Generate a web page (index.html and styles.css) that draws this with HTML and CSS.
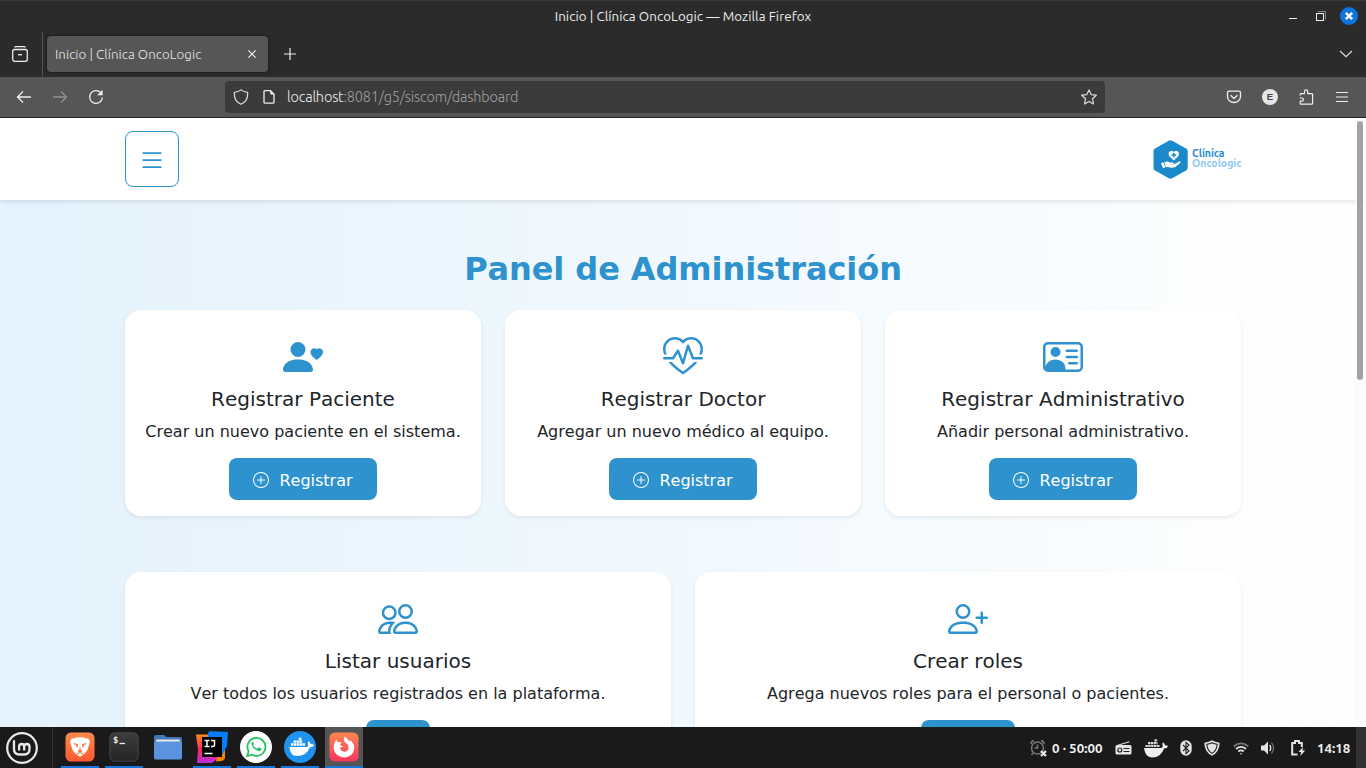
FILE: index.html
```html
<!DOCTYPE html>
<html lang="es">
<head>
<meta charset="utf-8">
<title>Inicio | Clínica OncoLogic</title>
<link rel="stylesheet" href="styles.css">
</head>
<body>
<div class="desktop">
  <div class="titlebar">
    <span class="titlebar-text">Inicio | Clínica OncoLogic — Mozilla Firefox</span>
    <div class="window-controls">
      <svg width="10" height="18" viewBox="0 0 10 18"><path d="M1 11.5h8" stroke="#eee"/></svg>
      <svg width="12" height="18" viewBox="0 0 12 18"><path d="M3 4.500h7.500v8" stroke="#888" fill="none"/><rect x="1.500" y="6.500" width="7" height="7" stroke="#eee" fill="none"/></svg>
      <svg width="18" height="18" viewBox="0 0 18 18"><circle cx="9" cy="9" r="9" fill="#0d74e0"/><path d="M5.800 5.800l6.400 6.400M12.200 5.800l-6.400 6.400" stroke="#fff" stroke-width="2.400"/></svg>
    </div>
  </div>
  <div class="tabstrip">
    <svg class="view-icon" width="16" height="16" viewBox="0 0 16 16" fill="none" stroke="#eee" stroke-width="1.300"><path d="M2.500 1.300Q3 .7 4 .7h8q1 0 1.500.6"/><rect x=".7" y="3.500" width="14.600" height="11.800" rx="2"/><path d="M6 8.700h4"/></svg>
    <div class="divider"></div>
    <div class="tab">
      <span>Inicio | Clínica OncoLogic</span>
      <svg width="8" height="8" viewBox="0 0 8 8"><path d="M.4.4l7.200 7.200M7.600.4L.4 7.600" stroke="#eee" stroke-width="1.200"/></svg>
    </div>
    <svg class="new-tab" width="12" height="12" viewBox="0 0 12 12"><path d="M6 0v12M0 6h12" stroke="#eee" stroke-width="1.200"/></svg>
    <svg class="all-tabs" width="14" height="8" viewBox="0 0 14 8"><path d="M1 1l6 5.600L13 1" fill="none" stroke="#ddd" stroke-width="1.200"/></svg>
  </div>
  <div class="toolbar">
    <svg width="16" height="16" viewBox="0 0 16 16" fill="none" stroke="#eee" stroke-width="1.300"><path d="M15 8H1.700M7 2.500L1.500 8 7 13.500"/></svg>
    <svg width="16" height="16" viewBox="0 0 16 16" fill="none" stroke="#909090" stroke-width="1.300"><path d="M1 8h13.300M9 2.500L14.500 8 9 13.500"/></svg>
    <svg width="16" height="16" viewBox="0 0 16 16" fill="none" stroke="#eee" stroke-width="1.300"><path d="M14.400 8.500A6.400 6.400 0 1 1 12.600 3.500"/><path d="M14.600.8v5.400H9.200z" fill="#eee" stroke="none"/></svg>
    <div class="urlbar">
      <svg width="16" height="16" viewBox="0 0 16 16" fill="none" stroke="#ddd" stroke-width="1.200"><path d="M8 .9Q6 2.700 1.400 3.400 .6 12 8 15.300 15.400 12 14.600 3.400 10 2.700 8 .9z"/></svg>
      <svg class="page-icon" width="12" height="16" viewBox="0 0 12 16" fill="none" stroke="#eee" stroke-width="1.300"><path d="M7.500 1.700H1.800Q1 1.700 1 2.500v10.800q0 .8.800.8h8.400q.8 0 .8-.8V5.200z"/><path d="M7.300 1.200l4.200 4.300H8.200q-.9 0-.9-.9z" fill="#eee" stroke="none"/></svg>
      <span class="url"><b>localhost</b>:8081/g5/siscom/dashboard</span>
      <svg class="star" width="16" height="16" viewBox="0 0 16 16" fill="none" stroke="#ddd" stroke-width="1.200" stroke-linejoin="round"><path d="M8 .9l2.200 4.700 5.100.6-3.800 3.500 1 5.300L8 12.400 3.500 15l1-5.300L.7 6.200l5.100-.6z"/></svg>
    </div>
    <div class="toolbar-actions">
      <svg width="16" height="16" viewBox="0 0 16 16" fill="none" stroke="#eee" stroke-width="1.300"><path d="M3 2.200h10q1.500 0 1.500 1.500V7.500a6.500 6 0 0 1-13 0V3.700Q1.500 2.200 3 2.200z"/><path d="M4.600 6.300L8 9.500l3.400-3.200"/></svg>
      <span class="avatar">E</span>
      <svg width="16" height="16" viewBox="0 0 16 16" fill="none" stroke="#eee" stroke-width="1.200" stroke-linejoin="round"><path d="M2.200 6.500V5.400q0-.8.800-.8h3.500V2.500a1.500 1.500 0 0 1 3.200 0v2.100h4q.9 0 .9.900V14.300q0 .9-.9.900H3q-.8 0-.8-.8v-2.200h1.700a1.500 1.500 0 0 0 0-3.200H1.700"/></svg>
      <svg width="16" height="16" viewBox="0 0 16 16" stroke="#eee" stroke-width="1.100"><path d="M2 3.500h12M2 8h12M2 12.500h12"/></svg>
    </div>
  </div>

  <div class="viewport">
    <header class="navbar">
      <button class="menu-btn"><svg width="28" height="28" viewBox="0 0 16 16" fill="currentColor"><path d="M2.500 12a.5.5 0 0 1 .5-.5h10a.5.5 0 0 1 0 1H3a.5.5 0 0 1-.5-.5m0-4a.5.5 0 0 1 .5-.5h10a.5.5 0 0 1 0 1H3a.5.5 0 0 1-.5-.5m0-4a.5.5 0 0 1 .5-.5h10a.5.5 0 0 1 0 1H3a.5.5 0 0 1-.5-.5"/></svg></button>
      <div class="brand">
        <svg width="35" height="39" viewBox="0 0 35 39"><path d="M15.800.8q1.700-.9 3.400 0l14.200 8q1.300.8 1.300 2.200v17q0 1.400-1.300 2.200l-14.200 8q-1.700.9-3.400 0l-14.200-8Q.5 29.400.5 28V11q0-1.400 1.100-2.200z" fill="#1b8acd"/><path d="M20.800 20.400l-4.300-4.200c-2.800-3.500 1.800-7.400 4.300-4.200 2.500-3.200 7.100.7 4.300 4.200z" fill="#fff"/><path d="M20.800 12.700v4.600M18.500 15h4.600" stroke="#1b8acd" stroke-width="1.600"/><path d="M8 23.300l2.300-1 2 5.300-2.200.7zM11.300 22.300q2.900-1.700 5.400.3h3.600q1.500 1.200-.2 1.700h-3.500q3.600.8 5.600-.5l4.400-2.500q1.500.1.500 1.600l-4.400 3.800q-3.300 2-7.700.4l-2.400-.1z" fill="#fff"/></svg>
        <div class="brand-text"><span class="brand-top">Clínica</span><span class="brand-sub">Oncologic</span></div>
      </div>
    </header>
    <main class="panel">
      <h1>Panel de Administración</h1>
      <section class="cards three">
        <article class="card">
          <svg class="card-icon" viewBox="0 0 16 16"><path d="M9 5a3 3 0 1 1-6 0 3 3 0 0 1 6 0m-9 8c0 1 1 1 1 1h10s1 0 1-1-1-4-6-4-6 3-6 4m13.500-8.090c1.387-1.425 4.855 1.070 0 4.277-4.854-3.207-1.387-5.702 0-4.276Z"/></svg>
          <h2>Registrar Paciente</h2><p>Crear un nuevo paciente en el sistema.</p>
          <button class="btn"><svg width="16" height="16" viewBox="0 0 16 16"><path d="M8 15A7 7 0 1 1 8 1a7 7 0 0 1 0 14m0 1A8 8 0 1 0 8 0a8 8 0 0 0 0 16"/><path d="M8 4a.5.5 0 0 1 .5.5v3h3a.5.5 0 0 1 0 1h-3v3a.5.5 0 0 1-1 0v-3h-3a.5.5 0 0 1 0-1h3v-3A.5.5 0 0 1 8 4"/></svg><span>Registrar</span></button>
        </article>
        <article class="card">
          <svg class="card-icon" viewBox="0 0 16 16"><path d="m8 2.748-.717-.737C5.600.281 2.514.878 1.400 3.053.918 3.995.78 5.323 1.508 7H.43c-2.128-5.697 4.165-8.830 7.394-5.857q.09.083.176.171a3 3 0 0 1 .176-.17c3.230-2.974 9.522.159 7.394 5.856h-1.078c.728-1.677.59-3.005.108-3.947C13.486.878 10.400.28 8.717 2.010zM2.212 10h1.315C4.593 11.183 6.050 12.458 8 13.795c1.949-1.337 3.407-2.612 4.473-3.795h1.315c-1.265 1.566-3.140 3.250-5.788 5-2.648-1.750-4.523-3.434-5.788-5"/><path d="M10.464 3.314a.5.5 0 0 0-.945.049L7.921 8.956 6.464 5.314a.5.5 0 0 0-.88-.091L3.732 8H.5a.5.5 0 0 0 0 1H4a.5.5 0 0 0 .416-.223l1.473-2.209 1.647 4.118a.5.5 0 0 0 .945-.049l1.598-5.593 1.457 3.642A.5.5 0 0 0 12 9h3.500a.5.5 0 0 0 0-1h-3.162z"/></svg>
          <h2>Registrar Doctor</h2><p>Agregar un nuevo médico al equipo.</p>
          <button class="btn"><svg width="16" height="16" viewBox="0 0 16 16"><path d="M8 15A7 7 0 1 1 8 1a7 7 0 0 1 0 14m0 1A8 8 0 1 0 8 0a8 8 0 0 0 0 16"/><path d="M8 4a.5.5 0 0 1 .5.5v3h3a.5.5 0 0 1 0 1h-3v3a.5.5 0 0 1-1 0v-3h-3a.5.5 0 0 1 0-1h3v-3A.5.5 0 0 1 8 4"/></svg><span>Registrar</span></button>
        </article>
        <article class="card">
          <svg class="card-icon" viewBox="0 0 16 16"><path d="M5 8a2 2 0 1 0 0-4 2 2 0 0 0 0 4m4-2.500a.5.5 0 0 1 .5-.5h4a.5.5 0 0 1 0 1h-4a.5.5 0 0 1-.5-.5M9 8a.5.5 0 0 1 .5-.5h4a.5.5 0 0 1 0 1h-4A.5.5 0 0 1 9 8m1 2.500a.5.5 0 0 1 .5-.5h3a.5.5 0 0 1 0 1h-3a.5.5 0 0 1-.5-.5"/><path d="M2 2a2 2 0 0 0-2 2v8a2 2 0 0 0 2 2h12a2 2 0 0 0 2-2V4a2 2 0 0 0-2-2zM1 4a1 1 0 0 1 1-1h12a1 1 0 0 1 1 1v8a1 1 0 0 1-1 1H8.960q.04-.245.040-.5C9 10.567 7.210 9 5 9c-2.086 0-3.800 1.398-3.984 3.181A1 1 0 0 1 1 12z"/></svg>
          <h2>Registrar Administrativo</h2><p>Añadir personal administrativo.</p>
          <button class="btn"><svg width="16" height="16" viewBox="0 0 16 16"><path d="M8 15A7 7 0 1 1 8 1a7 7 0 0 1 0 14m0 1A8 8 0 1 0 8 0a8 8 0 0 0 0 16"/><path d="M8 4a.5.5 0 0 1 .5.5v3h3a.5.5 0 0 1 0 1h-3v3a.5.5 0 0 1-1 0v-3h-3a.5.5 0 0 1 0-1h3v-3A.5.5 0 0 1 8 4"/></svg><span>Registrar</span></button>
        </article>
      </section>
      <section class="cards two">
        <article class="card">
          <svg class="card-icon" viewBox="0 0 16 16"><path d="M15 14s1 0 1-1-1-4-5-4-5 3-5 4 1 1 1 1zm-7.978-1L7 12.996c.001-.264.167-1.030.76-1.720C8.312 10.629 9.282 10 11 10c1.717 0 2.687.63 3.240 1.276.593.69.758 1.457.76 1.720l-.008.002-.014.002zM11 7a2 2 0 1 0 0-4 2 2 0 0 0 0 4m3-2a3 3 0 1 1-6 0 3 3 0 0 1 6 0M6.936 9.280a6 6 0 0 0-1.230-.247A7 7 0 0 0 5 9c-4 0-5 3-5 4q0 1 1 1h4.216A2.240 2.240 0 0 1 5 13c0-1.010.377-2.042 1.090-2.904.243-.294.526-.569.846-.816M4.920 10A5.500 5.500 0 0 0 4 13H1c0-.26.164-1.030.76-1.724.545-.636 1.492-1.256 3.160-1.275ZM1.500 5.500a3 3 0 1 1 6 0 3 3 0 0 1-6 0m3-2a2 2 0 1 0 0 4 2 2 0 0 0 0-4"/></svg>
          <h2>Listar usuarios</h2><p>Ver todos los usuarios registrados en la plataforma.</p>
          <button class="btn btn-list" aria-label="Listar"></button>
        </article>
        <article class="card">
          <svg class="card-icon" viewBox="0 0 16 16"><path d="M6 8a3 3 0 1 0 0-6 3 3 0 0 0 0 6m2-3a2 2 0 1 1-4 0 2 2 0 0 1 4 0m4 8c0 1-1 1-1 1H1s-1 0-1-1 1-4 6-4 6 3 6 4m-1-.004c-.001-.246-.154-.986-.832-1.664C9.516 10.680 8.289 10 6 10s-3.516.68-4.168 1.332c-.678.678-.83 1.418-.832 1.664z"/><path d="M13.500 5a.5.5 0 0 1 .5.5V7h1.500a.5.5 0 0 1 0 1H14v1.500a.5.5 0 0 1-1 0V8h-1.500a.5.5 0 0 1 0-1H13V5.500a.5.5 0 0 1 .5-.5"/></svg>
          <h2>Crear roles</h2><p>Agrega nuevos roles para el personal o pacientes.</p>
          <button class="btn btn-roles" aria-label="Crear"></button>
        </article>
      </section>
    </main>
    <div class="scrollbar"><div class="thumb"></div></div>
  </div>

  <footer class="taskbar">
    <div class="start"><svg width="32" height="32" viewBox="0 0 32 32" fill="none" stroke="#e8e8e8"><circle cx="16" cy="16" r="14.800" stroke-width="2.200"/><path d="M8 8.200v8.800q0 5.500 5.500 5.500h4.500q5.500 0 5.500-5.500v-2q0-3-2.700-3-2.600 0-2.600 3v3.500M18.200 15q0-3-2.500-3-2.600 0-2.600 3v3.500" stroke-width="2.300"/></svg></div>
    <div class="apps">
      <div class="app running"><svg width="30" height="30" viewBox="0 0 30 30"><defs><linearGradient id="br" x2="0" y2="1"><stop stop-color="#ff8a4a"/><stop offset="1" stop-color="#fb5a30"/></linearGradient></defs><rect x=".5" y=".5" width="29" height="29" rx="5.500" fill="url(#br)"/><path d="M9.500 6.500l2-1.300h7l2 1.300 2.500-.3 2 3.300-.9 3-1.600 5.500-2.500 3.300L15 25l-5-3.700L7.500 18l-1.600-5.500-.9-3 2-3.300z" fill="#fff"/><path d="M8.800 11.500l3.700 1.300-.8 2.600M21.200 11.500l-3.700 1.300.8 2.600M13 18.700l2 1 2-1M15 15.500v4M12 22l3-1.500 3 1.500" fill="none" stroke="#fb7040" stroke-width="1.300"/></svg></div>
      <div class="app running"><svg width="30" height="30" viewBox="0 0 30 30"><defs><linearGradient id="tm" x2="0" y2="1"><stop stop-color="#3d3d3d"/><stop offset="1" stop-color="#242424"/></linearGradient></defs><rect x=".8" y=".8" width="28.400" height="28.400" rx="5" fill="url(#tm)" stroke="#555" stroke-width=".7"/><text class="term-glyph" x="4" y="11">$</text><path d="M10.500 11.500h5.500" stroke="#eee" stroke-width="1.300"/></svg></div>
      <div class="app folder"><svg width="30" height="30" viewBox="0 0 30 30"><path d="M1 6q0-2 2-2h8l2.500 2H27q2 0 2 2v8H1z" fill="#4577b5"/><path d="M3 10q0-1.500 1-1.500h22q1 0 1 1.500v4H3z" fill="#e8e8e8"/><rect x="1" y="10.500" width="28" height="18" rx="1.500" fill="#5b93df"/></svg></div>
      <div class="app running"><svg width="32" height="32" viewBox="0 0 32 32"><defs><linearGradient id="ij" x2="0" y2="1"><stop stop-color="#ff8a1c"/><stop offset=".5" stop-color="#ff285c"/><stop offset="1" stop-color="#b92ce0"/></linearGradient></defs><path d="M0 3.500h13l13 21-10 7.500H1L2 19z" fill="url(#ij)"/><path d="M22 20l7-1v8q-1 3-4 3l-5 .5z" fill="#ff8000"/><path d="M12 2.500Q12 0 15 .2L32 1l-1 14-5 9L11 16z" fill="#087cfa"/><rect x="6" y="6" width="20" height="20"/><path d="M8.500 9.500h5M11 9.500v6M8.500 15.500h5M15 9.500h3.500V14q0 1.500-1.500 1.500h-2M8.500 22.500h8" stroke="#fff" stroke-width="1.500" fill="none"/></svg></div>
      <div class="app running"><svg width="32" height="32" viewBox="0 0 32 32"><circle cx="16" cy="16" r="16" fill="#fff"/><path d="M7.300 25l1.300-4.700A9 9 0 1 1 12 23.700z" fill="none" stroke="#22c35e" stroke-width="1.800"/><path d="M12.300 11q-1.200 1.300-.6 3 1.800 4.800 7.300 6.300 1.800 0 2.400-1.800l-.1-1-2.600-1.200-1.500 1.500q-3-1.200-4.200-3.800l1-1.300-1-2z" fill="#22c35e"/></svg></div>
      <div class="app running"><svg width="32" height="32" viewBox="0 0 32 32"><circle cx="16" cy="16" r="16" fill="#1f93ee"/><path d="M5.500 16h17q1.500-.3 1.900-1.200-1.600-2.600.1-4.600 2 1.100 2.200 3.100 2.100-.4 3.300.4-.9 2.700-4.200 2.700Q22.600 25 13 25q-7 0-7.500-9z" fill="#fff"/><path d="M7 13.500h14M9.500 10.700h9M14.800 8h3" stroke="#fff" stroke-width="2.300" stroke-dasharray="2.500 .4"/></svg></div>
      <div class="app running active"><svg width="30" height="30" viewBox="0 0 30 30"><defs><linearGradient id="ff" x2="0" y2="1"><stop stop-color="#ff8850"/><stop offset="1" stop-color="#f7365f"/></linearGradient></defs><rect x=".5" y=".5" width="29" height="29" rx="5.500" fill="url(#ff)"/><path d="M15.500 4.500q4 2.200 4.500 5.300l1.300-1.800Q26 12.500 25.200 17 23.500 25 15.500 25.500 7 25 5 18 4 12 7.300 8l1.500 2.300q2.200-.8 3.700.3l-1.500 2.200 3 2q-1.400 1.200-3.100.3.600 4.500 4.500 4.700 3.900-.5 4-4.400 0-3.200-3-5-2.500-3-.9-5.900z" fill="#fff"/></svg></div>
    </div>
    <div class="tray">
      <svg class="alarm" width="17" height="18" viewBox="0 0 17 18" fill="none" stroke="#777" stroke-width="1.500"><circle cx="7.500" cy="9" r="6"/><path d="M7.500 5.500V9h-3M1 5Q1 2 4 1.500M11 1.500q3 .5 3 3.500M3 14l-1.500 2"/><path d="M11 12l5 5M16 12l-5 5" stroke="#eee" stroke-width="2"/></svg>
      <span class="timer">0 · 50:00</span>
      <svg class="radio" width="17" height="14" viewBox="0 0 17 14"><path d="M2 4.500L14.500.7" stroke="#ddd" stroke-width="1.200"/><rect x=".5" y="4" width="16" height="9.500" rx="1.500" fill="#e4e4e4"/><circle cx="4.800" cy="9" r="2" fill="none" stroke="#222" stroke-width="1.200"/><path d="M8.500 7.500h6M8.500 10.500h6" stroke="#222" stroke-width="1.200"/></svg>
      <svg class="whale" width="24" height="20" viewBox="0 0 24 20" fill="#eee"><path d="M0 10h16.500q2-.3 2.300-1.500-1.300-2.300.2-4.300 2 1.300 2 3.200 1.800-.2 3 .5-.7 2.600-4 2.500Q17 19.500 8 19.500 1 19 0 10z"/><path d="M1.500 8h14.500M4 5.200h9.500M10.500 2.400h3" stroke="#ddd" stroke-width="2.200" stroke-dasharray="2.300 .5"/></svg>
      <svg class="bt" width="12" height="16" viewBox="0 0 12 16"><rect x=".3" y=".3" width="11.400" height="15.400" rx="5.700" fill="#e4e4e4"/><path d="M3 5l6 6-3 2.500v-11L9 5l-6 6" fill="none" stroke="#222" stroke-width="1.100"/></svg>
      <svg class="guard" width="16" height="16" viewBox="0 0 16 16"><path d="M8 .3q3 2 7.700 2.400Q15.500 12 8 15.700.5 12 .3 2.700 5 2.300 8 .3z" fill="#e4e4e4"/><path d="M8 2.700q2.500 1.200 5.200 1.500Q12.800 10.500 8 13.400 3.200 10.500 2.800 4.200 5.500 3.900 8 2.700z" fill="none" stroke="#1a1a1a" stroke-width="1.100"/></svg>
      <svg class="wifi" width="16" height="13" viewBox="0 0 16 13" fill="none" stroke="#e4e4e4" stroke-width="1.700"><path d="M.7 4.500q7.300-6.200 14.600 0" stroke="#777"/><path d="M3 7q5-4.200 10 0M5.300 9.500q2.700-2.300 5.400 0"/><circle cx="8" cy="11.700" r=".8" fill="#e4e4e4" stroke="none"/></svg>
      <svg class="sound" width="14" height="14" viewBox="0 0 14 14"><path d="M0 4.500h3L7 .5v13l-4-4H0z" fill="#e4e4e4"/><path d="M8.700 4q2 3 0 6" fill="none" stroke="#e4e4e4" stroke-width="1.400"/><path d="M10.500 1.500q4.200 5.500 0 11" fill="none" stroke="#777" stroke-width="1.200"/></svg>
      <svg class="battery" width="15" height="16" viewBox="0 0 15 16"><path d="M6.500 14.500H1.200V3H4V1h4v2h2.800v4" fill="none" stroke="#e4e4e4" stroke-width="2"/><path d="M12 7L7.500 12h2.700l-1 4 5-5.500h-2.800z" fill="#eee"/></svg>
      <span class="clock">14:18</span>
    </div>
    <div class="show-desktop"></div>
  </footer>
</div>
</body>
</html>
```
FILE: styles.css
```css
* { box-sizing: border-box; }
body { margin: 0; overflow: hidden; }
svg { display: block; flex: none; }
button { font: inherit; }
.desktop {
  width: 1366px; height: 768px;
  display: flex; flex-direction: column;
  font-family: Ubuntu, "Noto Sans", sans-serif;
}
.titlebar {
  height: 32px; flex: none;
  background: #2b2b2b; border-top: 1px solid #3a3a3a;
  display: grid; grid-template-columns: 1fr auto 1fr; align-items: center;
  color: #eee; font-size: 13.330px; padding-bottom: 1px;
}
.titlebar-text { grid-column: 2; letter-spacing: 0.07px; white-space: nowrap; }
.window-controls { justify-self: end; display: flex; align-items: center; padding-right: 8px; }
.window-controls svg:nth-child(2) { margin: 0 13px 0 17px; }
.tabstrip {
  height: 45px; flex: none;
  background: #2b2b2b;
  display: flex; align-items: center; padding: 0 13px 1px 12px;
}
.view-icon { margin-right: 14px; }
.divider { width: 1px; height: 44px; background: #555; align-self: flex-start; }
.tab {
  width: 221px; height: 36px; margin-left: 4px;
  background: #565656; border-radius: 4px; box-shadow: 0 0 3px rgba(0,0,0,.6);
  display: flex; align-items: center; justify-content: space-between;
  padding: 0 12px 0 8px; color: #e6e6e6; font-size: 13.330px; font-weight: 300;
}
.tab span { letter-spacing: 0.07px; white-space: nowrap; }
.new-tab { margin-left: 16px; }
.all-tabs { margin-left: auto; }
.toolbar {
  height: 41px; flex: none;
  background: #565656; border-bottom: 1px solid #242424;
  display: flex; align-items: center; padding: 0 16px; gap: 20px;
}
.urlbar {
  width: 880px; height: 32px; margin-left: 101px;
  background: #3b3b3b; border-radius: 4px;
  display: flex; align-items: center; padding: 0 8px;
}
.page-icon { margin: 0 12px 0 14px; }
.url { color: #a0a0a0; font-size: 14.500px; font-weight: 300; letter-spacing: -0.18px; white-space: nowrap; padding-bottom: 1px; }
.url b { color: #eee; font-weight: 300; }
.star { margin-left: auto; }
.toolbar-actions { display: flex; gap: 20px; margin-left: auto; align-items: center; }
.avatar {
  width: 16px; height: 16px; border-radius: 50%;
  background: #e6e6e6; color: #444; font: 700 9.500px/16px "Liberation Sans", sans-serif; text-align: center;
}

.viewport {
  flex: 1; min-height: 0; position: relative; overflow: hidden;
  background: linear-gradient(to right, #e3f2fd, #ffffff);
  font-family: Verdana, "DejaVu Sans", sans-serif; font-size: 16px; line-height: 24px; color: #212529;
  font-kerning: none;
}
.navbar {
  height: 82px; background: #fff; box-shadow: 0 2px 4px rgba(0,0,0,.1);
  position: relative;
  display: flex; align-items: center; justify-content: space-between; padding: 0 125px;
}
.menu-btn {
  width: 54px; height: 56px; border: 1px solid #2d92cd; border-radius: 8px;
  background: #fff; color: #2d92cd; display: grid; place-items: center; padding: 2px 0 0;
}
.brand { display: flex; align-items: center; gap: 4px; }
.brand-text {
  width: 49px; display: flex; flex-direction: column;
  font: 700 10.500px/10.500px Ubuntu, "Noto Sans", sans-serif; padding-bottom: 2px;
}
.brand-top { color: #1b8acd; }
.brand-sub { color: #8ac8f2; }
.panel { padding: 50px 125px 0; }
h1 { margin: 0 0 22px; font-size: 32px; line-height: 38px; font-weight: 700; text-align: center; color: #2d92cd; letter-spacing: -0.08px; }
.cards { display: grid; gap: 24px; }
.three { grid-template-columns: repeat(3, 1fr); }
.two { grid-template-columns: repeat(2, 1fr); margin-top: 56px; }
.card {
  height: 206px; background: #fff; border-radius: 16px; box-shadow: 0 2px 4px rgba(0,0,0,.075);
  padding: 27px 16px 16px; display: flex; flex-direction: column; align-items: center;
}
.card-icon { width: 40px; height: 40px; fill: #2d92cd; }
h2 { margin: 10px 0 9px; font-size: 20px; line-height: 24px; font-weight: 400; white-space: nowrap; }
p { margin: 0 0 14px; white-space: nowrap; }
.btn {
  width: 148px; height: 42px; border: 0; border-radius: 8px; padding: 2px 0 0;
  background: #2d92cd; color: #fff; display: flex; align-items: center; justify-content: center; gap: 10px;
}
.btn svg { fill: #fff; }
.btn span { padding-top: 2px; }
.btn-list { width: 64px; }
.btn-roles { width: 94px; }
.scrollbar { position: absolute; right: 0; top: 0; width: 12px; height: 100%; padding: 3px 3px 0; background: rgba(250,250,250,.6); }
.thumb { width: 6px; height: 259px; border-radius: 3px; background: #a3a3a3; }

.taskbar {
  height: 41px; flex: none; background: #1a1a1a; display: flex; align-items: stretch;
}
.start { width: 53px; border-right: 1px solid #333; padding: 5px 0 0 6px; }
.apps { display: flex; gap: 6px; margin-left: 8px; }
.app { width: 38px; display: grid; place-items: center; }
.folder { padding-bottom: 3px; }
.running { border-bottom: 2px solid #1376dc; padding-top: 1px; }
.active { background: #555; }
.term-glyph { font: 700 9px "DejaVu Sans Mono", monospace; fill: #eee; }
.tray { margin-left: auto; display: flex; align-items: center; color: #eee; font-size: 13.330px; font-weight: 700; padding-top: 1px; }
.timer { width: 52px; margin: 0 11px 0 5px; white-space: nowrap; }
.whale { margin: 0 12px; }
.guard { margin: 0 13px 0 12px; }
.sound { margin: 0 16px 0 12px; }
.clock { width: 33px; margin: 0 6px 0 11px; white-space: nowrap; }
.show-desktop { width: 10px; background: #333; }
```
